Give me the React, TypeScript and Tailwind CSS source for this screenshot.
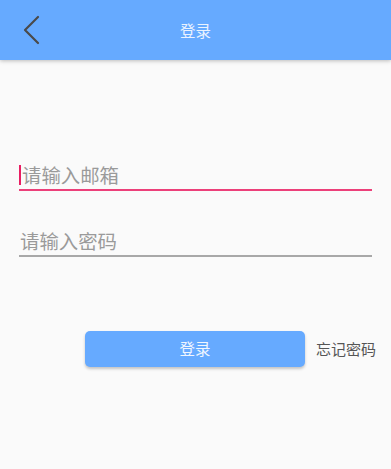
export default function App() {
  const font = { fontFamily: '"Noto Sans CJK SC", "Noto Sans", sans-serif' };
  return (
    <div className="w-[391px] h-[469px] bg-[#fafafa] overflow-hidden" style={font}>
      <div className="relative h-[60px] bg-[#66aaff] flex items-center justify-center shadow-[0_1px_4px_rgba(0,0,0,0.25)]">
        <svg className="absolute left-[20px] top-[13px]" width="24" height="34" viewBox="0 0 24 34">
          <path d="M18 4 L5 17 L18 30" fill="none" stroke="#4a4a4a" strokeWidth="2.2" strokeLinecap="round" strokeLinejoin="round" />
        </svg>
        <span className="text-[15.5px] text-[#eaf3ff] leading-none mt-[1px]">登录</span>
      </div>
      <div className="px-[19px] pr-[19px]">
        <div className="mt-[101px] h-[30px] border-b-2 border-[#ec407a] flex items-center">
          <span className="inline-block w-[2px] h-[20px] bg-[#e91e63] mr-[1px]" />
          <span className="text-[19.4px] leading-[28px] text-[#9a9a9a]">请输入邮箱</span>
        </div>
        <div className="mt-[36px] h-[30px] border-b-2 border-[#a8a8a8] flex items-center">
          <span className="text-[19.4px] leading-[28px] text-[#9a9a9a] ml-[1px]">请输入密码</span>
        </div>
      </div>
      <div className="mt-[74px] flex items-center">
        <button className="ml-[85px] w-[220px] h-[36px] rounded-[5px] bg-[#66aaff] text-[15.5px] text-[#f0f6ff] shadow-[0_2px_3px_rgba(0,0,0,0.22)] flex items-center justify-center">
          登录
        </button>
        <span className="ml-[11px] text-[15px] text-[#555555]">忘记密码</span>
      </div>
    </div>
  );
}
